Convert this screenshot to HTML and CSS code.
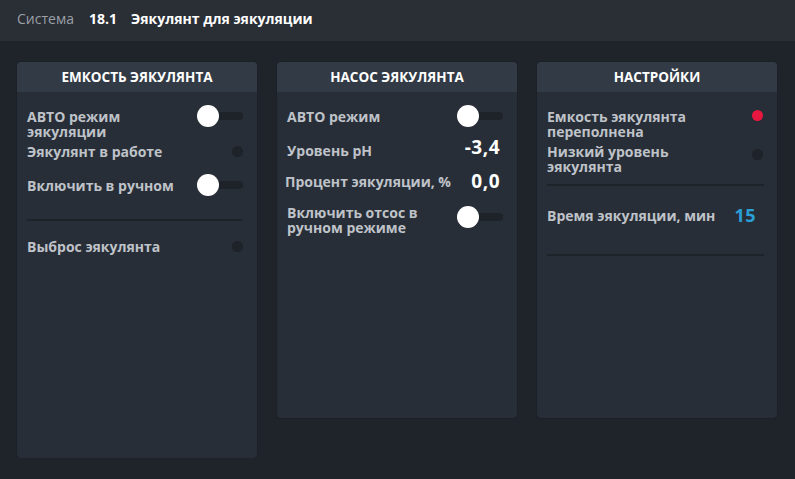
FILE: index.html
```html
<!DOCTYPE html>
<html>
<head>
    <title>Эякулянт для эякуляции</title>
    <link rel="stylesheet" href="styles.css">
</head>
<body>
    <div class="topbar">
        <span class="crumb">Система</span>
        <span class="code">18.1</span>
        <span class="title">Эякулянт для эякуляции</span>
    </div>

    <div class="panels">
        <div class="card tall">
            <div class="card-head">ЕМКОСТЬ ЭЯКУЛЯНТА</div>
            <div class="card-body">
                <div class="row">
                    <div class="label">АВТО режим<br>эякуляции</div>
                    <div class="toggle"><span class="knob"></span></div>
                </div>
                <div class="row">
                    <div class="label">Эякулянт в работе</div>
                    <div class="lamp"></div>
                </div>
                <div class="row">
                    <div class="label">Включить в ручном</div>
                    <div class="toggle"><span class="knob"></span></div>
                </div>
                <hr class="divider">
                <div class="row">
                    <div class="label">Выброс эякулянта</div>
                    <div class="lamp"></div>
                </div>
            </div>
        </div>

        <div class="card">
            <div class="card-head">НАСОС ЭЯКУЛЯНТА</div>
            <div class="card-body">
                <div class="row">
                    <div class="label">АВТО режим</div>
                    <div class="toggle"><span class="knob"></span></div>
                </div>
                <div class="row tight">
                    <div class="label">Уровень pH</div>
                    <div class="value up">-3,4</div>
                </div>
                <div class="row tight">
                    <div class="label wide">Процент эякуляции, %</div>
                    <div class="value">0,0</div>
                </div>
                <div class="row">
                    <div class="label">Включить отсос в<br>ручном режиме</div>
                    <div class="toggle low"><span class="knob"></span></div>
                </div>
            </div>
        </div>

        <div class="card">
            <div class="card-head">НАСТРОЙКИ</div>
            <div class="card-body">
                <div class="row">
                    <div class="label">Емкость эякулянта<br>переполнена</div>
                    <div class="lamp alarm"></div>
                </div>
                <div class="row">
                    <div class="label">Низкий уровень<br>эякулянта</div>
                    <div class="lamp down"></div>
                </div>
                <hr class="divider thin">
                <div class="row">
                    <div class="label">Время эякуляции, мин</div>
                    <div class="value setpoint">15</div>
                </div>
                <hr class="divider last">
            </div>
        </div>
    </div>
</body>
</html>
```

FILE: styles.css
```css
body {
    margin: 0;
    background-color: #1f232a;
    font-family: "Open Sans", "Noto Sans", sans-serif;
    color: #bfc3c9;
}

.topbar {
    height: 41px;
    background-color: #2a2e35;
    display: flex;
    align-items: center;
    padding: 0 17px 4px;
    box-sizing: border-box;
    font-size: 14px;
}
.crumb { color: #9ba0a7; margin-right: 15px; }
.code { color: #fff; font-weight: 700; margin-right: 14px; }
.title { color: #fff; font-weight: 700; }

.panels {
    display: flex;
    align-items: flex-start;
    gap: 20px;
    padding: 21px 17px 0;
}

.card {
    width: 240px;
    height: 356px;
    background-color: #282e37;
    border-radius: 4px;
    box-shadow: 0 0 1px rgba(0, 0, 0, 0.6);
    overflow: hidden;
}
.card.tall { height: 396px; }

.card-head {
    height: 30px;
    line-height: 31px;
    background-color: #323a46;
    color: #fff;
    font-weight: 700;
    font-size: 13.5px;
    text-align: center;
}

.card-body { padding: 13px 14px 0 10px; }

.row {
    display: flex;
    justify-content: space-between;
    align-items: flex-start;
    min-height: 33px;
    margin-bottom: 1px;
}
.row.tight { min-height: 30px; }

.label {
    padding-top: 4px;
    font-size: 14px;
    font-weight: 700;
    line-height: 15px;
}
.label.wide { margin-left: -2px; white-space: nowrap; }

.toggle {
    position: relative;
    width: 46px;
    height: 22px;
}
.toggle::before {
    content: "";
    position: absolute;
    left: 10px;
    right: 0;
    top: 7px;
    height: 8px;
    border-radius: 4px;
    background-color: #1e2229;
}
.toggle.low { margin-top: 5px; }
.knob {
    position: absolute;
    left: 0;
    top: 0;
    width: 22px;
    height: 22px;
    border-radius: 50%;
    background-color: #fff;
}

.lamp {
    width: 11px;
    height: 11px;
    margin-top: 6px;
    border-radius: 50%;
    background-color: #1e2229;
}
.lamp.alarm { background-color: #e8173f; margin-top: 5px; }
.lamp.down { margin-top: 9px; }

.value {
    color: #fff;
    font-weight: 700;
    font-size: 19px;
    line-height: 22px;
    margin-right: 3px;
    letter-spacing: 0.5px;
}
.value.up { margin-top: -3px; }
.value.setpoint { color: #2a9fd6; font-size: 18px; margin-right: 7px; }

.divider {
    border: none;
    border-top: 2px solid #1e2229;
    margin: 12px 0 14px;
}
.divider.thin { margin: 10px -1px 18px 0; }
.divider.last { margin: 17px -1px 0 0; }
```
